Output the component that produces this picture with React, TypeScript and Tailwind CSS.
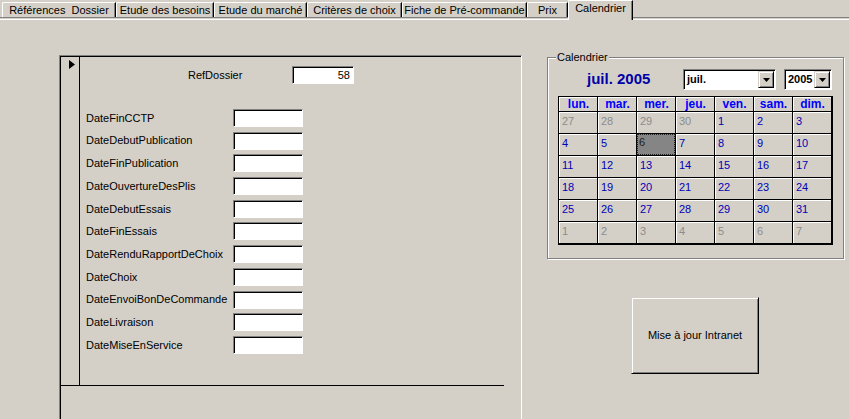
import React from "react";

const tabs = [
  { label: "Références  Dossier", cls: "w-[114px]" },
  { label: "Etude des besoins", cls: "w-[98px]" },
  { label: "Etude du marché", cls: "w-[93px]" },
  { label: "Critères de choix", cls: "w-[95px]" },
  { label: "Fiche de Pré-commande", cls: "w-[125px]" },
  { label: "Prix", cls: "w-[41px]" },
];

const fields = [
  "DateFinCCTP",
  "DateDebutPublication",
  "DateFinPublication",
  "DateOuvertureDesPlis",
  "DateDebutEssais",
  "DateFinEssais",
  "DateRenduRapportDeChoix",
  "DateChoix",
  "DateEnvoiBonDeCommande",
  "DateLivraison",
  "DateMiseEnService",
];

const dayNames = ["lun.", "mar.", "mer.", "jeu.", "ven.", "sam.", "dim."];

type Day = { d: number; muted?: boolean };

const weeks: Day[][] = [
  [{ d: 27, muted: true }, { d: 28, muted: true }, { d: 29, muted: true }, { d: 30, muted: true }, { d: 1 }, { d: 2 }, { d: 3 }],
  [{ d: 4 }, { d: 5 }, { d: 6 }, { d: 7 }, { d: 8 }, { d: 9 }, { d: 10 }],
  [{ d: 11 }, { d: 12 }, { d: 13 }, { d: 14 }, { d: 15 }, { d: 16 }, { d: 17 }],
  [{ d: 18 }, { d: 19 }, { d: 20 }, { d: 21 }, { d: 22 }, { d: 23 }, { d: 24 }],
  [{ d: 25 }, { d: 26 }, { d: 27 }, { d: 28 }, { d: 29 }, { d: 30 }, { d: 31 }],
  [{ d: 1, muted: true }, { d: 2, muted: true }, { d: 3, muted: true }, { d: 4, muted: true }, { d: 5, muted: true }, { d: 6, muted: true }, { d: 7, muted: true }],
];

const sunken =
  "bg-white border border-t-[#808080] border-l-[#808080] border-r-white border-b-white shadow-[inset_1px_1px_0_#000]";

const raised =
  "bg-[#d4d0c8] border border-t-[#d4d0c8] border-l-[#d4d0c8] border-r-black border-b-black shadow-[inset_1px_1px_0_#fff,inset_-1px_-1px_0_#808080]";

const Combo = ({ value, width }: { value: string; width: string }) => (
  <div className={`${width} h-[21px] flex items-center pl-[3px] pr-[1px] ${sunken}`}>
    <span className="flex-1 font-bold text-[11px] leading-[13px] text-black">{value}</span>
    <div className={`w-[16px] h-[17px] flex items-center justify-center ${raised}`}>
      <svg width="7" height="4" viewBox="0 0 7 4">
        <polygon points="0,0 7,0 3.5,4" fill="#000" />
      </svg>
    </div>
  </div>
);

export default function App() {
  return (
    <div className="w-[849px] h-[419px] overflow-hidden bg-[#d4d0c8] font-['Liberation_Sans',Arial,sans-serif] text-[11px] text-black flex flex-col">
      {/* tab strip */}
      <div className="h-[17px] flex items-start pl-[2px] shrink-0">
        {tabs.map((t) => (
          <div
            key={t.label}
            className={`${t.cls} mt-[2px] h-[15px] flex items-center justify-center pt-[1px] whitespace-pre border-t border-l border-white border-r border-r-black shadow-[inset_-1px_0_0_#808080] rounded-tl-[2px]`}
          >
            {t.label}
          </div>
        ))}
        <div className="relative z-10 w-[65px] h-[20px] bg-[#d4d0c8] flex justify-center pt-[1px] leading-[13px] border-t border-l border-white border-r border-r-black shadow-[inset_-1px_0_0_#808080] rounded-tl-[2px]">
          Calendrier
        </div>
      </div>
      <div className="h-px bg-[#808080] shrink-0" />
      <div className="h-px shrink-0" />
      <div className="h-px bg-white shrink-0" />

      {/* page content */}
      <div className="flex flex-1">
        {/* subform */}
        <div className="pl-[59px] pt-[35px]">
          <div className="w-[463px] h-[380px] border-t border-l border-t-[#808080] border-l-[#808080] border-r border-r-white">
            <div className="h-full border-t border-l border-black">
              <div className="flex w-[443px] h-[329px] border-b border-black">
                <div className="w-[19px] border-r border-black pl-[8px] pt-[3px]">
                  <svg width="6" height="9" viewBox="0 0 6 9">
                    <polygon points="0,0 6,4.5 0,9" fill="#000" />
                  </svg>
                </div>
                <div className="flex-1">
                  <div className="flex items-center mt-[9px] h-[18px] pl-[108px]">
                    <span className="w-[104px]">RefDossier</span>
                    <div className={`w-[62px] h-[18px] text-right pr-[3px] leading-[16px] ${sunken}`}>58</div>
                  </div>
                  <div className="mt-[25px] flex flex-col">
                    {fields.map((f) => (
                      <div key={f} className="h-[22.7px] flex items-start">
                        <span className="w-[153px] pl-[6px] h-[18px] flex items-center">{f}</span>
                        <div className={`w-[70px] h-[18px] ${sunken}`} />
                      </div>
                    ))}
                  </div>
                </div>
              </div>
            </div>
          </div>
        </div>

        {/* right column */}
        <div className="flex flex-col pl-[25px]">
          <div className="relative mt-[37px] w-[297px] h-[202px] border border-[#808080] shadow-[inset_1px_1px_0_#fff,1px_1px_0_#fff]">
            <span className="absolute -top-[7px] left-[8px] px-[1px] bg-[#d4d0c8] leading-[13px]">Calendrier</span>
            <div className="flex items-center mt-[11px] h-[21px]">
              <span className="w-[135px] pl-[39px] font-bold text-[15px] text-[#0000a8] leading-[18px] -mt-[2px]">
                juil. 2005
              </span>
              <Combo value="juil." width="w-[93px]" />
              <div className="w-[8px]" />
              <Combo value="2005" width="w-[48px]" />
            </div>
            <div className="ml-[10px] mt-[6px] w-[275px] border-t border-l border-r-2 border-b-2 border-black bg-black grid grid-cols-7 gap-px">
              {dayNames.map((n) => (
                <div
                  key={n}
                  className="h-[14px] bg-[#d4d0c8] border-t border-l border-white flex items-center justify-center font-bold text-[12px] text-[#0000ff] leading-[13px]"
                >
                  {n}
                </div>
              ))}
              {weeks.map((w, wi) =>
                w.map((day, di) => {
                  const selected = wi === 1 && di === 2;
                  return (
                    <div
                      key={`${wi}-${di}`}
                      className={
                        selected
                          ? "h-[21px] bg-[#858585] border border-dotted border-[#202020] pl-[1px] text-[11px] leading-[14px] text-[#202020]"
                          : `h-[21px] bg-[#d4d0c8] border-t border-l border-white pl-[2px] pt-[1px] text-[11px] leading-[14px] ${
                              day.muted ? "text-[#8c8c8c]" : "text-[#0000b4]"
                            }`
                      }
                    >
                      {day.d}
                    </div>
                  );
                })
              )}
            </div>
          </div>

          <button
            className={`ml-[84px] mt-[38px] w-[128px] h-[77px] flex items-center justify-center text-[11px] text-black ${raised}`}
          >
            Mise à jour Intranet
          </button>
        </div>
      </div>
    </div>
  );
}
